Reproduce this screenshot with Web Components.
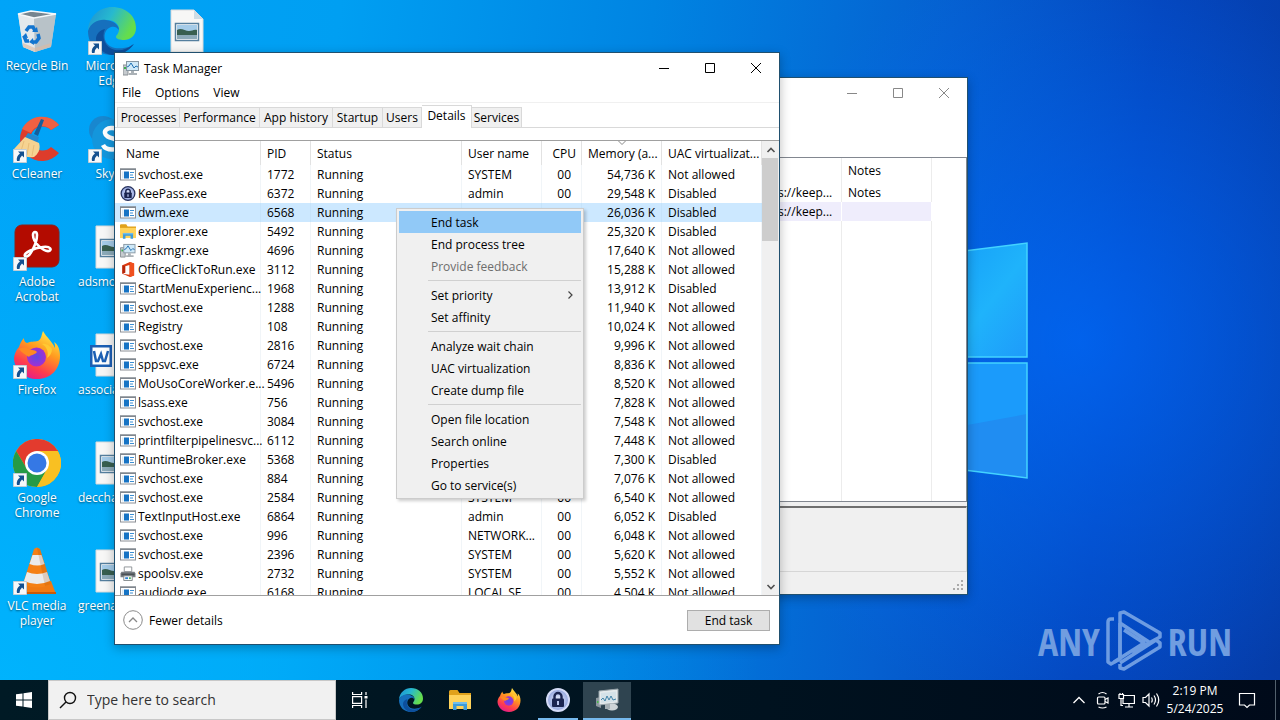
<!DOCTYPE html>
<html lang="en">
<head>
<meta charset="utf-8">
<title>Desktop</title>
<style>
html,body{margin:0;height:100%;overflow:hidden}
body{font:12px/15px "Open Sans","Noto Sans",sans-serif;color:#000}
</style>
</head>
<body>
<desk-top>
  <desk-icons slot="icons"></desk-icons>
  <any-run slot="mark"></any-run>
  <app-window slot="windows" class="vault" inactive>
    <vault-list></vault-list>
  </app-window>
  <app-window slot="windows" class="manager" icon="taskmgr" caption="Task Manager">
    <task-manager></task-manager>
  </app-window>
  <context-menu slot="windows"></context-menu>
  <task-bar slot="bar"></task-bar>
</desk-top>

<script>
const ICONS = {
  proc: `<svg viewBox="0 0 16 14"><rect x=".5" y="1.500" width="15" height="11" fill="#fff" stroke="#8c9096"/><path d="M0 1h16v1.500H0z" fill="#7f868e"/><rect x="4" y="4" width="5" height="7" fill="#1673c4"/><path d="M2 4h1.500v7H2z" fill="#d8e8f4"/><path d="M10 5h4M10 7.500h3M10 10h4" stroke="#3b8ed2"/></svg>`,
  key: `<svg viewBox="0 0 24 24"><defs><radialGradient id="k"><stop offset="0" stop-color="#eef2ff"/><stop offset="1" stop-color="#8fa2dd"/></radialGradient></defs><circle cx="12" cy="12" r="11" fill="url(#k)" stroke="var(--ring,#d4dbf6)" stroke-width="2"/><path d="M8.500 12V8.500a3.500 3.500 0 0 1 7 0V12" fill="none" stroke="#1b2450" stroke-width="2.400"/><rect x="6" y="10.500" width="12" height="8.500" rx="1" fill="#1b2450"/><path d="M11 13h2v4h-2z" fill="#b9c5ee"/></svg>`,
  folder: `<svg viewBox="0 0 22 20"><path d="M0 1.500Q0 0 1.500 0h7l2 3H22v4H0z" fill="#e0a21c"/><path d="M0 5h22v14H0z" fill="#ffd35b"/><path d="M4 20v-8h14v8h-3.500v-4h-7v4z" fill="#3d9bd9"/><path d="M4 12h14v2H4z" fill="#70bdec"/></svg>`,
  taskmgr: `<svg viewBox="0 0 16 16"><path d="M0 5h5v10H0z" fill="#c6cbcf" stroke="#8b9196"/><path d="M1 7h2v2H1z" fill="#3cae50"/><rect x="3.500" y="1.500" width="12" height="9" fill="#cfe9f8" stroke="#8797a3"/><path d="M4 7l2-1 2-3 3 5 2-2 2 1" fill="none" stroke="#2170b2"/><path d="M8 11h3v2h3v2H6v-2h2z" fill="#aab1b6"/></svg>`,
  taskmgrBig: `<svg viewBox="0 0 24 22"><path d="M1 9l5-1v11l-5-2z" fill="#8c979e"/><path d="M2 12h2v2H2z" fill="#49b84d"/><path d="M4 2l19-2v14L4 16z" fill="#e5eaec" stroke="#98a4aa"/><path d="M6 4l15-1.500v10L6 14z" fill="#d5e2e8"/><path d="M6 11l2-2 2 3 2-5 2 4 2-4 2 4 3-1" fill="none" stroke="#4283a8"/><ellipse cx="17" cy="18" rx="6" ry="3.500" fill="#cdd4d7"/><path d="M10 15h5v5h-5z" fill="#a5afb4"/></svg>`,
  office: `<svg viewBox="0 0 16 16"><path d="M2 3.500L10 0l4.500 1.500v13L10 16 2 12.500l7.500 1V3.200L5 4.400v7L2 12.500z" fill="#dc3b11"/><path d="M10 0l4.500 1.500v13L10 16z" fill="#f0501e"/><path d="M2 3.500l3 1v7l-3 1z" fill="#b5260b"/></svg>`,
  printer: `<svg viewBox="0 0 16 16"><path d="M4 1h8v5H4z" fill="#fff" stroke="#8d9296"/><path d="M1 6h14l1 2v4H0V8z" fill="#777d82"/><path d="M1 8h14v2H1z" fill="#4b5055"/><path d="M3.500 10.500h9v5h-9z" fill="#fff" stroke="#80868a"/><path d="M5 12h3v2H5z" fill="#2f7fd0"/><path d="M9 12h2v2H9z" fill="#45b060"/></svg>`,
  bin: `<svg viewBox="0 0 48 48"><path d="M5 7l38-1-5 34-16 5-12-5z" fill="#cfd6da" opacity=".92"/><path d="M5 7l16 4 1 34-12-5z" fill="#e4e9ec"/><path d="M21 11l22-4-5 33-16 5z" fill="#b8c2c8"/><path d="M5 7l13-3 25 3-22 4z" fill="#76858f" stroke="#f5f8fa" stroke-width="1.500"/><path d="M10 36l12 5 16-5v3l-16 6-12-5z" fill="#dcb9a0" opacity=".6"/><g fill="none" stroke="#1375cf" stroke-width="3.500"><path d="M13 24l3-4h4l2 4"/><path d="M25 27l1 4-3 4h-3"/><path d="M16 34h-3l-2-5"/></g><path d="M19 25l6 0-1-5zM20 31l-4 4 5 3zM9 30l4-4 2 5z" fill="#1375cf"/></svg>`,
  edge: `<svg viewBox="0 0 48 48"><defs><linearGradient id="e1" x2="1" y2=".4"><stop stop-color="#1d8fd4"/><stop offset=".5" stop-color="#27b9cf"/><stop offset="1" stop-color="#65dd4c"/></linearGradient></defs><path d="M0 23C1 9 12 0 24 0c14 0 24 9 24 21 0 8-6 12-12 12-4 0-8-1-8-3 0-2 3-3 3-8 0-5-5-9-11-9-8 0-17 4-20 10z" fill="url(#e1)"/><path d="M0 24c3-9 11-12 18-11 8 1 13 5 13 10-2-3-5-4-8-3-6 2-8 9-5 15 4 7 14 8 26 4-5 6-12 9-20 9C10 48 0 38 0 24z" fill="#1670bd"/><path d="M17 22c-4 8 0 19 10 21 7 1 12-1 17-5l2-1c-5 7-13 11-22 11-9-1-16-8-16-16 0-5 4-9 9-10z" fill="#0d4f9c"/></svg>`,
  file: `<svg viewBox="0 0 48 48"><path d="M8 3h23l9 9v33H8z" fill="#f7f7f6" stroke="#d8dadb"/><path d="M31 3l9 9h-9z" fill="#cddce5"/><rect x="12.500" y="16.500" width="23" height="17" fill="#fff" stroke="#557f9e" stroke-width="1.500"/><path d="M14 18h20v14H14z" fill="#a4cbe8"/><path d="M14 23c4-3 8 1 12 1 3 0 5-2 8-1v5H14z" fill="#385f50"/><path d="M14 28h20v4H14z" fill="#8caab9"/></svg>`,
  word: `<svg viewBox="0 0 48 48"><path d="M8 3h32v42H8z" fill="#f5f5f5" stroke="#d3d7da"/><path d="M2 14h22v22H2z" fill="#1c5fb4"/><path d="M4.500 16.500h17v17h-17z" fill="#fff"/><path d="M6 20l2 10h2l3-7 2 7h2l3-10" fill="none" stroke="#1c5fb4" stroke-width="2.500"/></svg>`,
  ccleaner: `<svg viewBox="0 0 48 48"><path d="M46 10A22 22 0 1 0 46 38l-8-6a12 12 0 1 1 0-17z" fill="#dd3c2b"/><path d="M46 10A22 22 0 0 0 9 14l9 4a12 12 0 0 1 20-3z" fill="#ef6042"/><path d="M28 4l3 1-6 16-4-2z" fill="#155e9b"/><path d="M15 18l11 4-2 7-13-5z" fill="#2389cf"/><path d="M12 22l14 6c2 6-1 11-5 14C12 43 5 40 1 34z" fill="#f6d391"/><path d="M11 26L8 36M16 28l-2 12M21 30l-2 11" stroke="#e8bd77"/></svg>`,
  skype: `<svg viewBox="0 0 48 48"><circle cx="15" cy="15" r="14" fill="#1887cf"/><circle cx="33" cy="33" r="14" fill="#0a6ab8"/><circle cx="24" cy="24" r="20" fill="#1496dc"/><path d="M32 17c-3-6-16-5-15 1 1 7 16 4 15 12-1 6-14 6-17 0" fill="none" stroke="#fff" stroke-width="4.500"/></svg>`,
  acrobat: `<svg viewBox="0 0 48 48"><rect x="2" y="2" width="44" height="42" rx="7" fill="#b30b00" stroke="#8d2019"/><path d="M12 33c-2-3 9-8 18-9 8-1 9 3 6 4-5 1-16-8-16-16 0-4 4-4 4 0 0 8-8 25-12 21z" fill="none" stroke="#fff" stroke-width="2.600"/></svg>`,
  firefox: `<svg viewBox="0 0 48 48"><defs><linearGradient id="f" x1=".8" x2=".3" y2="1"><stop stop-color="#fff04a"/><stop offset=".4" stop-color="#ff9a1f"/><stop offset=".75" stop-color="#ff3d4d"/><stop offset="1" stop-color="#e41b8c"/></linearGradient><radialGradient id="g"><stop stop-color="#5a4be8"/><stop offset="1" stop-color="#a32fd0"/></radialGradient></defs><path d="M30 0c-2 5-1 7-5 10-4 1-7 0-11 2-3-1-3-4-3-5-3 3-4 6-5 9C3 19 1 24 1 28c1 12 11 20 23 20 14 0 23-10 23-23 0-6-2-12-6-14 1 2 1 4 1 6C39 10 34 7 30 0z" fill="url(#f)"/><circle cx="23.500" cy="26" r="9.500" fill="url(#g)"/><path d="M6 18c4-2 8-2 11 1 3 0 5 0 7 2-2 3-7 3-8 5-3-2-7-4-10-8z" fill="#ff8a22"/><path d="M29 13c5 3 7 8 5 14 3-2 5-5 5-9-2-3-6-6-10-5z" fill="#ffca32"/></svg>`,
  chrome: `<svg viewBox="0 0 48 48"><circle cx="24" cy="24" r="24" fill="#f9bd18"/><path d="M24 24L3.200 12A24 24 0 0 1 44.800 12z" fill="#e33b2e"/><path d="M24 12h20.800" stroke="#e33b2e" stroke-width="2"/><path d="M3.200 12L14 30l10-6-2-12z" fill="#e33b2e"/><path d="M34 30L24 48A24 24 0 0 1 3.200 12L14 30z" fill="#269a46"/><path d="M34.400 30L24 48a24 24 0 0 0 20.800-36H24z" fill="#f9c022"/><circle cx="24" cy="24" r="12" fill="#fff"/><circle cx="24" cy="24" r="9.500" fill="#3578e5"/></svg>`,
  vlc: `<svg viewBox="0 0 48 48"><path d="M11 34h27l5 13H5z" fill="#f07a13"/><path d="M5 45h38v2H5z" fill="#c95a08"/><path d="M21 2q3-3 6 0l11 35q-14 7-28 0z" fill="#f58015"/><path d="M19.500 8h9l3 9q-7 3-15 0zM14 25q10 4 20 0l3 9q-13 6-26 0z" fill="#ebebeb"/><path d="M27 2l11 35-6 2-8-38z" fill="#9d4a08" opacity=".2"/></svg>`,
  link: `<svg viewBox="0 0 14 14"><path d="M.5.500h13v13H.5z" fill="#f6f8fa" stroke="#c2cdd4"/><path d="M5 2.500h6v6L9 6.500Q7 8 6.500 12H4q-1-5 3-7.500z" fill="#14508f"/></svg>`,
  min: `<svg viewBox="0 0 12 12"><path d="M1 6.500h10" stroke="currentColor" fill="none"/></svg>`,
  max: `<svg viewBox="0 0 12 12"><path d="M1.500 1.500h9v9h-9z" stroke="currentColor" fill="none"/></svg>`,
  close: `<svg viewBox="0 0 12 12"><path d="M1 1l10 10M11 1L1 11" stroke="currentColor" fill="none"/></svg>`,
  up: `<svg viewBox="0 0 10 10"><path d="M1.500 7L5 3.500 8.500 7" stroke="currentColor" stroke-width="1.600" fill="none"/></svg>`,
  down: `<svg viewBox="0 0 10 10"><path d="M1.500 3L5 6.500 8.500 3" stroke="currentColor" stroke-width="1.600" fill="none"/></svg>`,
  thin: `<svg viewBox="0 0 10 10"><path d="M1.500 3L5 6.500 8.500 3" stroke="currentColor" fill="none"/></svg>`,
  right: `<svg viewBox="0 0 10 10"><path d="M3.500 1.500L7 5 3.500 8.500" stroke="#444" stroke-width="1.200" fill="none"/></svg>`,
  fewer: `<svg viewBox="0 0 20 20"><circle cx="10" cy="10" r="9.300" fill="#fff" stroke="#8a8a8a"/><path d="M6 12l4-4 4 4" fill="none" stroke="#888" stroke-width="1.300"/></svg>`,
  start: `<svg viewBox="0 0 16 16"><path d="M0 2.300l6.500-.9v6.100H0zM7.500 1.200L16 0v7.500H7.500zM0 8.500h6.500v6.100L0 13.700zM7.500 8.500H16V16l-8.500-1.200z" fill="#fff"/></svg>`,
  search: `<svg viewBox="0 0 18 18"><circle cx="11" cy="7" r="5.500" fill="none" stroke="#111" stroke-width="1.400"/><path d="M7 11l-6 6" stroke="#111" stroke-width="1.400"/></svg>`,
  view: `<svg viewBox="0 0 18 16" fill="none" stroke="#fff" stroke-width="1.200"><path d="M1.600 0v2.500h9V0M1.600 16v-2.500h9V16M1.600 4.600h9v6.800h-9zM15 0v3M15 7.500V16"/><path d="M13.500 4h3v2.500h-3z" fill="#fff" stroke="none"/></svg>`,
  chev: `<svg viewBox="0 0 14 14"><path d="M1.500 10L7 4.500l5.500 5.500" fill="none" stroke="#fff" stroke-width="1.300"/></svg>`,
  meet: `<svg viewBox="0 0 14 18" fill="none" stroke="#fff" stroke-width="1.200"><rect x="1.500" y="6" width="7.500" height="7" rx="1"/><path d="M9 8.500l3-1.500v5L9 10.500M2.500 3q4-3 8 0M2.500 16q4 2 8 0"/></svg>`,
  net: `<svg viewBox="0 0 18 16" fill="none" stroke="#fff" stroke-width="1.200"><path d="M6 3.500h10.400v8H5V7M11 12v3M7 15h8M1 2.500h4.500v4H1zM3 7v6.500h2M2 1v2M4.500 1v2"/></svg>`,
  sound: `<svg viewBox="0 0 18 16" fill="none" stroke="#fff" stroke-width="1.200"><path d="M1 5.500h2.500L7 2v12l-3.500-3.500H1zM9.500 5.500q1.500 2.500 0 5M12 3.500q3 4.500 0 9M14.500 1.500q4.500 6.500 0 13"/></svg>`,
  note: `<svg viewBox="0 0 18 18"><path d="M1.500 2.500h15v11.500h-5L9 16.500 6.500 14h-5z" fill="none" stroke="#fff" stroke-width="1.200"/></svg>`
};

function define(name, css, html) {
  customElements.define(name, class extends HTMLElement {
    constructor() { super(); this.attachShadow({mode: "open"}); }
    connectedCallback() {
      this.shadowRoot.innerHTML = `<style>:host,*{box-sizing:border-box}button{font:inherit;color:inherit;background:none;border:0;padding:0;margin:0}${css}</style>` +
        (typeof html === "function" ? html(this) : html);
    }
  });
}

define("ui-icon", `:host{display:inline-flex;flex:none;width:16px;height:16px}svg{width:100%;height:100%;display:block}`,
  el => ICONS[el.getAttribute("name")].replace("<svg", '<svg aria-hidden="true"'));

define("desk-top", `
  :host{display:flex;flex-direction:column;height:100vh}
  .space{flex:1;position:relative;min-height:0;overflow:hidden;background:
    radial-gradient(ellipse 380px 380px at 1080px 340px,#006cffb0,#0060f000 100%),
    radial-gradient(ellipse 760px 560px at 0 100%,#00b8ffc0,#00b4ff00 100%),
    linear-gradient(97deg,#00a4f8 0,#009ff2 25%,#0084e2 48%,#0560d0 70%,#0446bd 85%,#053ca8 100%)}
  .panes{position:absolute;left:940px;top:230px;width:90px;height:260px}
  ::slotted(.manager){position:absolute;left:114px;top:52px;width:666px;height:593px}
  ::slotted(.vault){position:absolute;left:700px;top:77px;width:268px;height:518px}
  ::slotted(context-menu){position:absolute;left:396px;top:208px}
  ::slotted(any-run){position:absolute;right:48px;bottom:8px}`,
  `<div class="space">
    <svg class="panes" viewBox="940 230 90 260"><defs><linearGradient id="p" y2="1"><stop stop-color="#149cf8"/><stop offset=".55" stop-color="#1fb3fb"/><stop offset="1" stop-color="#1e9bfa"/></linearGradient></defs>
    <path d="M940 254L1027 243V357H940z" fill="url(#p)"/><path d="M940 363H1027V478L940 467z" fill="#1b9bfb"/><path d="M940 430L1027 414V478L940 467z" fill="#208df2"/>
    <path d="M940 254L1027 243V357H940M940 363H1027V478L940 467" fill="none" stroke="#43d3ff" stroke-width="1.500"/></svg>
    <slot name="icons"></slot><slot name="mark"></slot><slot name="windows"></slot>
  </div><slot name="bar"></slot>`);

define("any-run", `
  :host{display:flex;align-items:center;gap:6px;color:#709de0;font:300 38px/62px "Open Sans Condensed","Liberation Sans Narrow","Roboto Condensed","Liberation Sans",sans-serif}
  svg{width:56px;height:62px;flex:none}`,
  `<span>ANY</span><svg viewBox="0 0 56 62" fill="none" stroke="#6d9ce2" stroke-width="3.500" stroke-linejoin="round"><path d="M8 9H5q-3 0-3 3v40l3 2 9-5V3l4-1 36 21v4L26 42"/><path d="M14 13l29 19M14 13v36M14 54v4l4 1 36-22v-4L50 30 14 53M18 20l20 13L8 52"/></svg><span>RUN</span>`);

define("desk-icon", `
  :host{display:flex;flex-direction:column;align-items:center;width:74px;height:108px;color:#fff}
  a{display:flex;flex-direction:column;align-items:center;color:inherit;text-decoration:none;width:100%;padding-top:7px}
  .art{position:relative;display:flex}
  .art>ui-icon{width:48px;height:48px}
  .art>ui-icon.link{position:absolute;left:0;bottom:0;width:14px;height:14px}
  .label{display:block;width:100%;margin-top:3px;text-align:center;text-shadow:0 1px 2px #0008;overflow:hidden}
  .label.start{text-align:left;padding-left:3px}`,
  el => `<a href="#"><span class="art"><ui-icon name="${el.getAttribute("icon")}"></ui-icon>${el.hasAttribute("link") ? '<ui-icon class="link" name="link"></ui-icon>' : ""}</span><span class="label ${el.hasAttribute("start") ? "start" : ""}">${el.getAttribute("label")}</span></a>`);

define("desk-icons", `
  :host{display:grid;grid-auto-flow:column;grid-template-rows:repeat(6,108px);grid-auto-columns:75px;width:max-content}`,
  [["bin","Recycle Bin",""],["ccleaner","CCleaner","link"],["acrobat","Adobe<br>Acrobat","link"],["firefox","Firefox","link"],["chrome","Google<br>Chrome","link"],["vlc","VLC media<br>player","link"],
   ["edge","Microsoft<br>Edge","link"],["skype","Skype","link"],["file","adsmo","start"],["word","associa","start"],["file","deccha","start"],["file","greena","start"],["file","",""]]
  .map(([i,l,a]) => `<desk-icon icon="${i}" label="${l}" ${a}></desk-icon>`).join(""));

define("app-window", `
  :host{display:flex;flex-direction:column;background:#fff;border:1px solid #20506f;box-shadow:0 3px 10px #0004}
  header{display:flex;align-items:center;height:30px;padding-left:8px;flex:none}
  header ui-icon{margin-right:5px}
  .controls{display:flex;margin-left:auto}
  .controls button{width:46px;height:28px;display:grid;place-items:center}
  .controls ui-icon{width:12px;height:12px;margin:0}
  :host([inactive]) .controls{color:#888}
  ::slotted(*){flex:1;min-height:0}`,
  el => `<header>${el.getAttribute("icon") ? `<ui-icon name="${el.getAttribute("icon")}"></ui-icon>` : ""}<span>${el.getAttribute("caption") || ""}</span>
    <div class="controls"><button aria-label="Minimize"><ui-icon name="min"></ui-icon></button><button aria-label="Maximize"><ui-icon name="max"></ui-icon></button><button aria-label="Close"><ui-icon name="close"></ui-icon></button></div></header><slot></slot>`);

const TABS = [["Processes",63],["Performance",80],["App history",73],["Startup",50],["Users",39],["Details",50],["Services",50]];
define("task-manager", `
  :host{display:flex;flex-direction:column}
  nav{display:flex;height:20px;flex:none;border-bottom:1px solid #f0f0f0}
  nav button{padding:0 7px;height:19px}
  .tabs{display:flex;align-items:flex-end;height:25px;flex:none;padding:2px 2px 0;border-bottom:1px solid #d9d9d9}
  .tabs button{height:20px;background:#f0f0f0;border:1px solid #d9d9d9;border-left:0;border-bottom:0;white-space:nowrap}
  .tabs button:first-child{border-left:1px solid #d9d9d9}
  .tabs button.on{height:23px;background:#fff;margin-bottom:-1px;padding-bottom:3px}
  .list{flex:1;min-height:0;display:flex;margin-top:12px;border-block:1px solid #a0a0a0}
  process-table{flex:1;min-width:0}
  .bar{width:17px;background:#f0f0f0;display:flex;flex-direction:column;color:#505050;flex:none}
  .bar button{height:17px;display:grid;place-items:center}
  .bar ui-icon{width:10px;height:10px}
  .thumb{height:83px;margin-right:1px;background:#cdcdcd}
  .fill{flex:1}
  footer{display:flex;align-items:center;justify-content:space-between;height:48px;flex:none;padding:0 9px 0 8px}
  .fewer{display:flex;align-items:center;gap:6px}
  .fewer ui-icon{width:20px;height:20px}
  .end{width:83px;height:21px;background:#e1e1e1;border:1px solid #adadad}`,
  `<nav><button>File</button><button>Options</button><button>View</button></nav>
   <div class="tabs" role="tablist">${TABS.map(([t,w]) => `<button role="tab" class="${t === "Details" ? "on" : ""}" style="width:${w}px">${t}</button>`).join("")}</div>
   <div class="list"><process-table></process-table><div class="bar"><button aria-label="Scroll up"><ui-icon name="up"></ui-icon></button><div class="thumb"></div><div class="fill"></div><button aria-label="Scroll down"><ui-icon name="down"></ui-icon></button></div></div>
   <footer><button class="fewer"><ui-icon name="fewer"></ui-icon>Fewer details</button><button class="end">End task</button></footer>`);

const N = "Not allowed", D = "Disabled";
const ROWS = [
  ["proc","svchost.exe",1772,"SYSTEM","00","54,736",N],
  ["key","KeePass.exe",6372,"admin","00","29,548",D],
  ["proc","dwm.exe",6568,"","","26,036",D],
  ["folder","explorer.exe",5492,"","","25,320",D],
  ["taskmgr","Taskmgr.exe",4696,"","","17,640",N],
  ["office","OfficeClickToRun.exe",3112,"","","15,288",N],
  ["proc","StartMenuExperienc...",1968,"","","13,912",D],
  ["proc","svchost.exe",1288,"","","11,940",N],
  ["proc","Registry",108,"","","10,024",N],
  ["proc","svchost.exe",2816,"","","9,996",N],
  ["proc","sppsvc.exe",6724,"","","8,836",N],
  ["proc","MoUsoCoreWorker.e...",5496,"","","8,520",N],
  ["proc","lsass.exe",756,"","","7,828",N],
  ["proc","svchost.exe",3084,"","","7,548",N],
  ["proc","printfilterpipelinesvc...",6112,"","","7,448",N],
  ["proc","RuntimeBroker.exe",5368,"","","7,300",D],
  ["proc","svchost.exe",884,"","","7,076",N],
  ["proc","svchost.exe",2584,"SYSTEM","00","6,540",N],
  ["proc","TextInputHost.exe",6864,"admin","00","6,052",D],
  ["proc","svchost.exe",996,"NETWORK...","00","6,048",N],
  ["proc","svchost.exe",2396,"SYSTEM","00","5,620",N],
  ["printer","spoolsv.exe",2732,"SYSTEM","00","5,552",N],
  ["proc","audiodg.exe",6168,"LOCAL SE...","00","4,504",N]
];
define("process-table", `
  :host{display:block;overflow:hidden}
  table{table-layout:fixed;width:100%;border-collapse:separate;border-spacing:0}
  th,td{padding:0 0 0 6px;border-right:1px solid #f1f5f8;font-weight:400;text-align:left;white-space:nowrap}
  th{height:24px;border-color:#e2e2e2;position:relative}
  td{height:19px;line-height:19px}
  th:first-child{padding-left:11px}
  td:first-child{padding-left:5px}
  .name{display:flex;align-items:center;gap:2px;height:19px}
  .name ui-icon{height:15px;--ring:#26305c}
  .r{text-align:right;padding-right:6px}
  td.cpu{text-align:right;padding-right:10px}
  th.cpu{text-align:right;padding-right:5px}
  .sel td{background:#cce8ff;border-color:#c5e3fa}
  .sort{position:absolute;left:35px;top:-3px;width:10px;height:10px;color:#888}`,
  `<table><colgroup><col style="width:146px"><col style="width:50px"><col style="width:151px"><col style="width:80px"><col style="width:40px"><col style="width:80px"><col></colgroup>
   <thead><tr><th>Name</th><th>PID</th><th>Status</th><th>User name</th><th class="cpu">CPU</th><th><ui-icon class="sort" name="thin"></ui-icon>Memory (a...</th><th>UAC virtualizat...</th></tr></thead>
   <tbody>${ROWS.map(([i,n,p,u,c,m,v]) => `<tr class="${n === "dwm.exe" ? "sel" : ""}"><td><div class="name"><ui-icon name="${i}"></ui-icon><span>${n}</span></div></td><td>${p}</td><td>Running</td><td>${u}</td><td class="cpu">${c}</td><td class="r">${m} K</td><td>${v}</td></tr>`).join("")}</tbody></table>`);

define("vault-list", `
  :host{display:flex;flex-direction:column;background:#f0f0f0}
  .tools{height:49px;background:#fff;flex:none}
  .grid{flex:1;background:#fff;border:1px solid #828790;border-left:0;display:flex;flex-direction:column}
  table{border-collapse:separate;border-spacing:0;table-layout:fixed;width:231px;height:100%}
  th,td{font-weight:400;text-align:left;padding:0 0 0 6px;border-right:1px solid #ececec;height:19px;white-space:nowrap}
  td:first-child{padding-left:77px}
  th{height:25px}
  .sel td{background:#efedfc;border-color:#fff}
  .rest td{height:auto}
  .view{height:66px;margin-top:4px;border:1px solid #d6d6d6;border-top:2px solid #6f6f6f;border-left:0;flex:none}
  footer{height:22px;flex:none;display:flex;align-items:flex-end;justify-content:flex-end;padding:3px}
  footer svg{width:11px;height:11px}`,
  `<div class="tools"></div><div class="grid"><table><colgroup><col style="width:141px"><col></colgroup><thead><tr><th></th><th>Notes</th></tr></thead><tbody><tr><td>s://keep...</td><td>Notes</td></tr><tr class="sel"><td>s://keep...</td><td></td></tr><tr class="rest"><td></td><td></td></tr></tbody></table></div><div class="view"></div>
  <footer><svg viewBox="0 0 11 11"><path d="M8 0h2v2H8zM4 4h2v2H4zM8 4h2v2H8zM0 8h2v2H0zM4 8h2v2H4zM8 8h2v2H8z" fill="#aaa"/></svg></footer>`);

define("context-menu", `
  :host{display:flex;flex-direction:column;width:188px;padding:2px;background:#f0f0f0;border:1px solid #ccc;box-shadow:2px 2px 3px #0003}
  button{display:flex;align-items:center;justify-content:space-between;height:22px;padding:0 6px 0 32px;text-align:left}
  button.on{background:#91c9f7}
  button:disabled{color:#6d6d6d}
  ui-icon{width:10px;height:10px}
  hr{width:153px;height:1px;margin:3px 0 3px 29px;border:0;background:#d0d0d0}`,
  `<button class="on" role="menuitem">End task</button><button role="menuitem">End process tree</button><button role="menuitem" disabled>Provide feedback</button><hr>
   <button role="menuitem">Set priority<ui-icon name="right"></ui-icon></button><button role="menuitem">Set affinity</button><hr>
   <button role="menuitem">Analyze wait chain</button><button role="menuitem">UAC virtualization</button><button role="menuitem">Create dump file</button><hr>
   <button role="menuitem">Open file location</button><button role="menuitem">Search online</button><button role="menuitem">Properties</button><button role="menuitem">Go to service(s)</button>`);

define("task-bar", `
  :host{display:flex;align-items:stretch;height:40px;flex:none;background:linear-gradient(90deg,#001a25,#00121f 60%,#000a1a);color:#fff}
  button{width:49px;display:grid;place-items:center}
  .start{width:48px}
  .find{display:flex;align-items:center;width:288px;background:#f1f1f1;border:1px solid #c8c8c8;padding-left:10px;gap:10px;color:#222}
  .find ui-icon{width:18px;height:18px}
  input{flex:1;min-width:0;border:0;background:none;padding:0;font:14px/20px "Open Sans",sans-serif;outline:0}
  input::placeholder{color:#333;opacity:1}
  .view{width:50px;padding-right:2px}
  .app ui-icon{width:24px;height:24px}
  .app .short{height:20px;width:22px}
  .run{border-block:2px solid transparent;border-bottom-color:#76b9ed;width:40px;margin:0 5px}
  .on{border-block:2px solid transparent;border-bottom-color:#76b9ed;background:#2f4450 padding-box;width:48px}
  .tray{display:flex;align-items:center;margin-left:auto}
  .tray button{width:24px;height:40px}
  .tray ui-icon{width:18px;height:18px}
  .tray .s ui-icon{width:14px}
  .clock{width:64px;text-align:center;line-height:18px;white-space:nowrap}
  .tray .note{width:40px}
  .peek{width:5px;height:40px;border-left:1px solid #52606c;margin-left:8px}`,
  `<button class="start" aria-label="Start"><ui-icon name="start"></ui-icon></button>
   <label class="find"><ui-icon name="search"></ui-icon><input type="text" placeholder="Type here to search" aria-label="Search"></label>
   <button class="view" aria-label="Task View"><ui-icon name="view" style="width:18px"></ui-icon></button>
   <button class="app" aria-label="Edge"><ui-icon name="edge"></ui-icon></button>
   <button class="app" aria-label="File Explorer"><ui-icon class="short" name="folder"></ui-icon></button>
   <button class="app" aria-label="Firefox"><ui-icon name="firefox"></ui-icon></button>
   <button class="app run" aria-label="KeePass"><ui-icon name="key"></ui-icon></button>
   <button class="app on" aria-label="Task Manager"><ui-icon name="taskmgrBig"></ui-icon></button>
   <div class="tray"><button class="s" aria-label="Show hidden icons"><ui-icon name="chev"></ui-icon></button><button class="s" aria-label="Meet Now"><ui-icon name="meet"></ui-icon></button><button aria-label="Network"><ui-icon name="net"></ui-icon></button><button aria-label="Volume"><ui-icon name="sound"></ui-icon></button>
   <div class="clock"><div>2:19 PM</div><div>5/24/2025</div></div><button class="note" aria-label="Notifications"><ui-icon name="note"></ui-icon></button><div class="peek"></div></div>`);
</script>
</body>
</html>
